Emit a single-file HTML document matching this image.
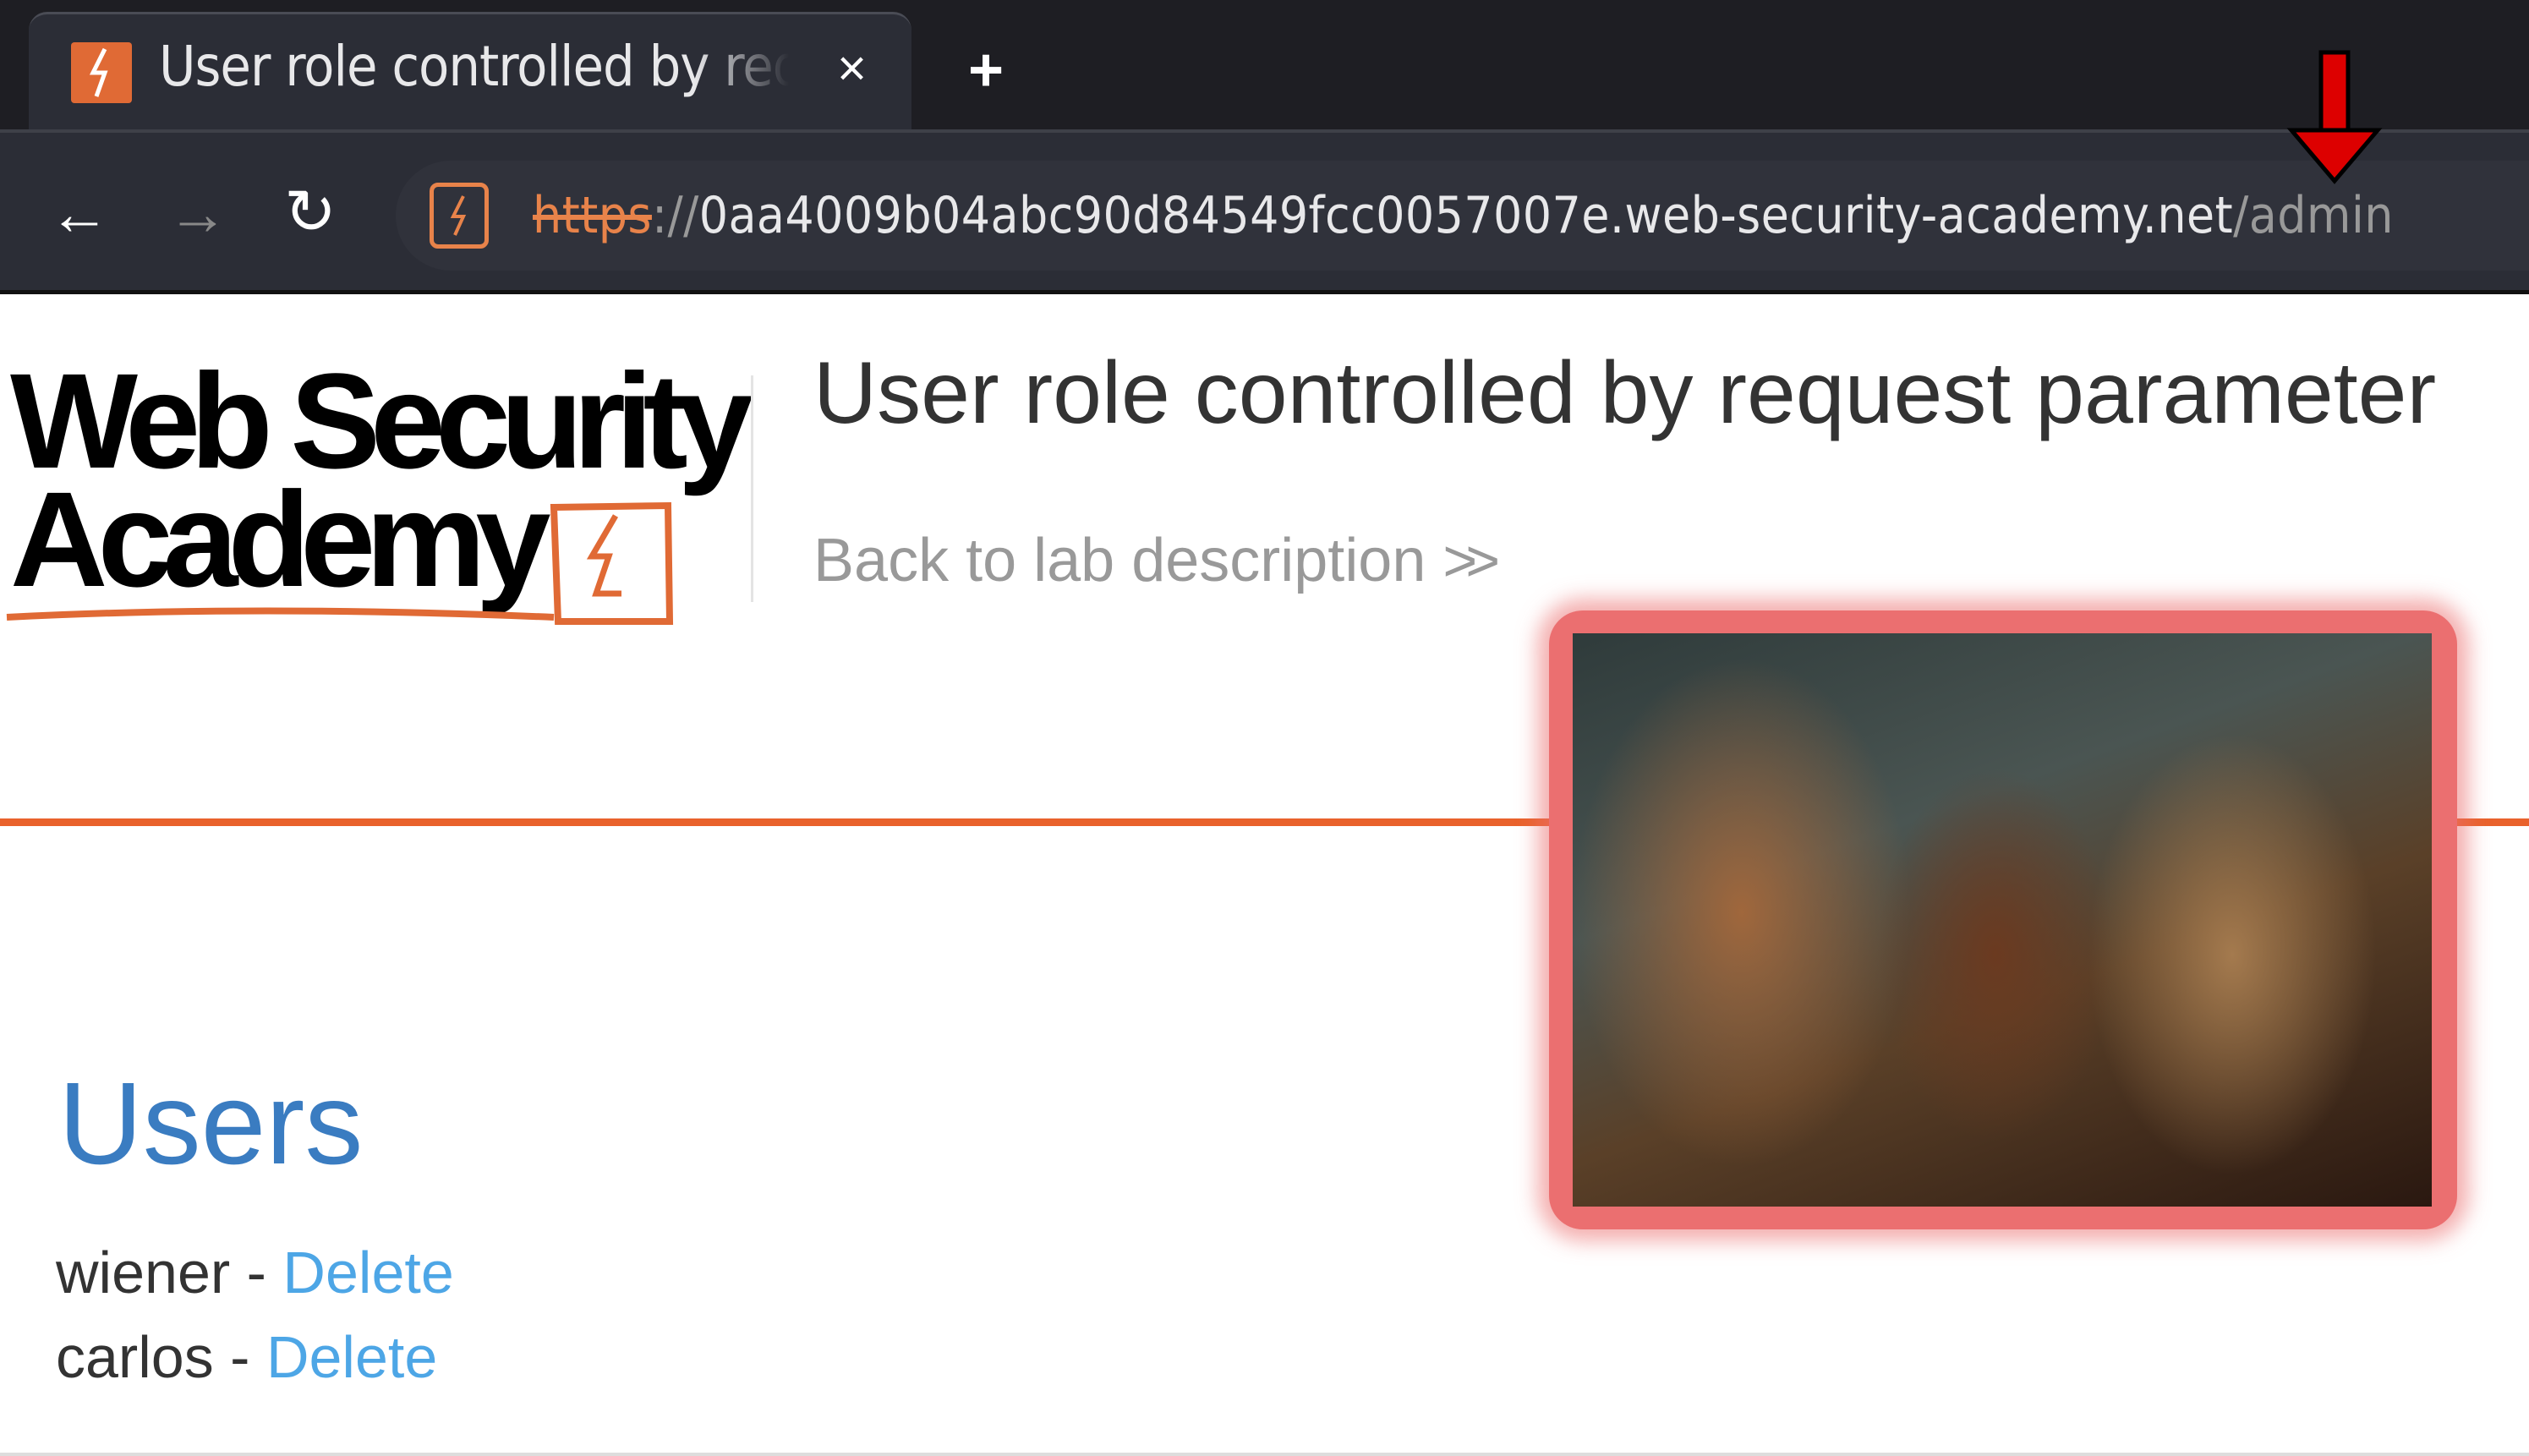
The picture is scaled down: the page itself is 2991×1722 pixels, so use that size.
<!DOCTYPE html>
<html><head><style>
*{margin:0;padding:0;box-sizing:border-box}
body{width:2991px;height:1722px;background:#fff;position:relative;overflow:hidden;font-family:"Liberation Sans",sans-serif}
.abs{position:absolute}
</style></head><body>
<div class="abs" style="left:0;top:0;width:2991px;height:155px;background:#1e1e23"></div>
<div class="abs" style="left:34px;top:14px;width:1044px;height:150px;background:#2b2d36;border-radius:22px 22px 0 0;border-top:3px solid #4a4c55"></div>
<div class="abs" style="left:0;top:153px;width:2991px;height:194px;background:#2b2d36;border-top:4px solid #3e4048"></div>
<div class="abs" style="left:0;top:343px;width:2991px;height:5px;background:#111"></div>
<div class="abs" style="left:84px;top:50px;width:72px;height:72px;background:#e06a35;border-radius:4px"></div>
<svg class="abs" style="left:84px;top:50px" width="72" height="72"><path d="M40 8 L26 36 L40 36 L30 64" stroke="#fff" stroke-width="5" fill="none"/></svg>
<div class="abs" style="left:188px;top:40px;font-size:66px;color:#e8e8ea;white-space:nowrap;width:745px;overflow:hidden;font-family:'DejaVu Sans Condensed','Liberation Sans',sans-serif;letter-spacing:-1px;-webkit-mask-image:linear-gradient(90deg,#000 85%,transparent)">User role controlled by request</div>
<div class="abs" style="left:990px;top:46px;font-size:60px;color:#fff">×</div>
<div class="abs" style="left:1145px;top:42px;font-size:72px;color:#fff;font-weight:bold">+</div>
<div class="abs" style="left:58px;top:212px;font-size:72px;color:#fff">←</div>
<div class="abs" style="left:198px;top:212px;font-size:72px;color:#888">→</div>
<div class="abs" style="left:336px;top:208px;font-size:74px;color:#fff">↻</div>
<div class="abs" style="left:468px;top:190px;width:2523px;height:130px;background:#30323b;border-radius:65px 0 0 65px"></div>
<div class="abs" style="left:508px;top:216px;width:70px;height:78px;border:5px solid #e8834a;border-radius:10px"></div>
<svg class="abs" style="left:508px;top:216px" width="70" height="78"><path d="M40 16 L28 40 L40 40 L30 62" stroke="#e8834a" stroke-width="4" fill="none"/></svg>
<div class="abs" style="left:630px;top:220px;font-size:60px;color:#e8e8ea;white-space:nowrap;font-family:'DejaVu Sans Condensed','Liberation Sans',sans-serif;letter-spacing:0.4px"><span style="color:#e8834a;text-decoration:line-through">https</span><span style="color:#999">://</span>0aa4009b04abc90d84549fcc0057007e.web-security-academy.net<span style="color:#999">/admin</span></div>
<svg class="abs" style="left:2700px;top:58px" width="130" height="160"><rect x="45" y="4" width="32" height="92" fill="#d00" stroke="#000" stroke-width="5"/><path d="M10 96 L112 96 L61 156 Z" fill="#d00" stroke="#000" stroke-width="5"/></svg>

<div class="abs" style="left:12px;top:428px;font-size:160px;font-weight:bold;letter-spacing:-12px;line-height:140px;color:#000;font-family:'Liberation Sans',sans-serif">Web Security<br>Academy</div>
<svg class="abs" style="left:0;top:570px" width="800" height="180"><path d="M655 30 L790 28 L792 165 L660 165 Z M8 160 Q300 145 655 160" stroke="#e06a35" stroke-width="8" fill="none"/><path d="M728 40 L700 88 L720 88 L705 132 L735 132" stroke="#e06a35" stroke-width="7" fill="none"/></svg>
<div class="abs" style="left:888px;top:444px;width:3px;height:268px;background:#e4e4e4"></div>
<div class="abs" style="left:962px;top:406px;font-size:104px;color:#333;white-space:nowrap">User role controlled by request parameter</div>
<div class="abs" style="left:962px;top:622px;font-size:72px;color:#999;white-space:nowrap">Back to lab description <span style="font-size:70px;letter-spacing:-14px">&gt;&gt;</span></div>
<div class="abs" style="left:0;top:968px;width:2991px;height:9px;background:#e9622c"></div>
<div class="abs" style="left:1832px;top:722px;width:1074px;height:732px;background:#eb6f70;border-radius:40px;box-shadow:0 0 24px 14px rgba(235,111,112,.55)"></div>
<div class="abs" style="left:1860px;top:749px;width:1016px;height:678px;background:
radial-gradient(ellipse 140px 220px at 500px 380px,#6b3a20,transparent),
radial-gradient(ellipse 200px 300px at 200px 330px,#a0673c,transparent),
radial-gradient(ellipse 170px 260px at 780px 380px,#a47a4e,transparent),
linear-gradient(160deg,#2f3b3b 0%,#4a5552 35%,#5a4028 60%,#2a1810 100%)"></div>
<div class="abs" style="left:69px;top:1250px;font-size:138px;color:#3a7cc1">Users</div>
<div class="abs" style="left:66px;top:1465px;font-size:70px;color:#333">wiener - <span style="color:#4da6e6">Delete</span></div>
<div class="abs" style="left:66px;top:1565px;font-size:70px;color:#333">carlos - <span style="color:#4da6e6">Delete</span></div>
<div class="abs" style="left:0;top:1718px;width:2991px;height:4px;background:#ddd"></div>
</body></html>
